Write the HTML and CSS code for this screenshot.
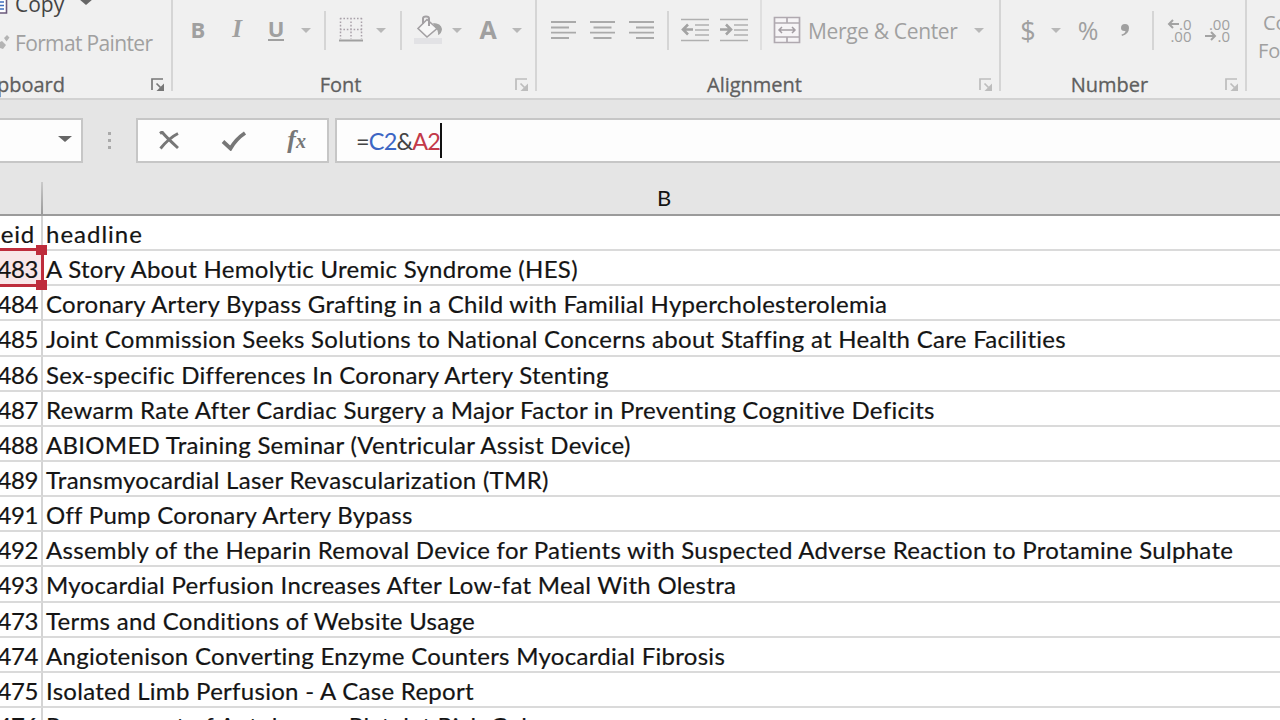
FILE: index.html
```
<!DOCTYPE html>
<html lang="en">
<head>
  <meta charset="UTF-8">
  <title>Spreadsheet</title>
  <link rel="stylesheet" href="styles.css">
</head>
<body>
  <div class="ribbon">
    <div class="group clipboard">
      <div class="clip-item copy">
        <svg class="clip-icon" width="8" height="22" viewBox="0 0 8 22"><path d="M0 3h6.5v17H0" fill="#fff" stroke="#6b5a7c" stroke-width="1.6"/><path d="M0 9h4M0 12.5h4M0 16h4" stroke="#3f6fc0" stroke-width="1.5"/></svg>
        <span>Copy</span>
        <i class="arrow dark"></i>
      </div>
      <div class="clip-item painter">
        <svg class="clip-icon" width="10" height="18" viewBox="0 0 10 18"><path d="M4 4l3-3 2.500 2.500-3 4zM0 8l2-1 4 4-3 4-3-1z" fill="#b4b4b4"/></svg>
        <span>Format Painter</span>
      </div>
      <div class="label">pboard</div>
      <svg class="launcher dark" width="14" height="14" viewBox="0 0 14 14"><use href="#launch"/></svg>
    </div>

    <div class="group font">
      <div class="tools">
        <b>B</b>
        <i class="italic">I</i>
        <b class="under">U</b>
        <i class="arrow"></i>
        <i class="sep"></i>
        <svg width="24" height="26" viewBox="0 0 24 26"><path d="M1 1.500h22M1 12.500h22M1.500 1v21M12 1v21M22.500 1v21" fill="none" stroke="#a9a1a9" stroke-width="1.500" stroke-dasharray="1.600 1.800"/><path d="M0 23.500h24" stroke="#a0a0a0" stroke-width="2"/></svg>
        <i class="arrow"></i>
        <i class="sep"></i>
        <svg width="30" height="30" viewBox="0 0 30 30"><path d="M1 23h28v6H1z" fill="#e2e2e5"/><path d="M14 4.500l10 9-10 8.500-9-8.500z" fill="#f7f7f7" stroke="#a3a0a3" stroke-width="1.600"/><path d="M10 9V3.500q0-2 3-2t3 2V11" fill="none" stroke="#a3a0a3" stroke-width="2"/><path d="M20 8q8 0 9 6-.5 5-4 6 .5-5-3-8z" fill="#a3a3a3"/></svg>
        <i class="arrow"></i>
        <b class="color-a">A</b>
        <i class="arrow"></i>
      </div>
      <div class="label">Font</div>
      <svg class="launcher" width="14" height="14" viewBox="0 0 14 14"><use href="#launch"/></svg>
    </div>

    <div class="group alignment">
      <div class="tools">
        <svg width="25" height="20" viewBox="0 0 25 20"><path d="M0 2h25M0 7.500h18M0 12.700h25M0 18h18" stroke="#aaa" stroke-width="1.800"/></svg>
        <svg width="25" height="20" viewBox="0 0 25 20"><path d="M0 2h25M3.500 7.500h18M0 12.700h25M3.500 18h18" stroke="#aaa" stroke-width="1.800"/></svg>
        <svg width="25" height="20" viewBox="0 0 25 20"><path d="M0 2h25M7 7.500h18M0 12.700h25M7 18h18" stroke="#aaa" stroke-width="1.800"/></svg>
        <i class="sep"></i>
        <svg width="28" height="26" viewBox="0 0 28 26"><path d="M0 2.500h28M14 8h14M14 13h14M14 18h14M0 23.500h28" stroke="#b0b0b0" stroke-width="1.700"/><path d="M12 12.500H2M7 7.500l-5 5 5 5" fill="none" stroke="#a3a3a3" stroke-width="2.600"/></svg>
        <svg width="28" height="26" viewBox="0 0 28 26"><path d="M0 2.500h28M14 8h14M14 13h14M14 18h14M0 23.500h28" stroke="#b0b0b0" stroke-width="1.700"/><path d="M0 12.500h10M6 7.500l5 5-5 5" fill="none" stroke="#a3a3a3" stroke-width="2.600"/></svg>
        <i class="sep tall"></i>
        <svg width="28" height="28" viewBox="0 0 28 28"><path d="M1.500 1.500h25v25h-25zM1.500 7h25M1.500 21h25M14 1.500V7M14 21v5.500" fill="#f6f4f6" stroke="#b0a9b0" stroke-width="1.700"/><path d="M6 14h16M9 11l-3 3 3 3M19 11l3 3-3 3" fill="none" stroke="#a39da3" stroke-width="1.500"/></svg>
        <span class="merge">Merge &amp; Center</span>
        <i class="arrow"></i>
      </div>
      <div class="label">Alignment</div>
      <svg class="launcher" width="14" height="14" viewBox="0 0 14 14"><use href="#launch"/></svg>
    </div>

    <div class="group number">
      <div class="tools">
        <span class="sign dollar">$</span>
        <i class="arrow"></i>
        <span class="sign">%</span>
        <svg width="10" height="14" viewBox="0 0 10 14"><path d="M5 1q4 0 4 4 0 6-7 8l-.5-1.500q3.500-1 4-3.500Q1 8.500 1 5q0-4 4-4z" fill="#a0a0a0"/></svg>
        <i class="sep"></i>
        <div class="decimals">
          <div><svg width="12" height="10" viewBox="0 0 12 10"><path d="M12 5H2M6 1L2 5l4 4" fill="none" stroke="#a3a3a3" stroke-width="2"/></svg>.0</div>
          <div>.00</div>
        </div>
        <div class="decimals">
          <div>.00</div>
          <div><svg width="12" height="10" viewBox="0 0 12 10"><path d="M0 5h10M6 1l4 4-4 4" fill="none" stroke="#a3a3a3" stroke-width="2"/></svg>.0</div>
        </div>
      </div>
      <div class="label">Number</div>
      <svg class="launcher" width="14" height="14" viewBox="0 0 14 14"><use href="#launch"/></svg>
    </div>

    <div class="group styles">
      <div>Conditional</div>
      <div>Formatting</div>
    </div>
  </div>

  <div class="formula-bar">
    <div class="name-box"><i class="arrow dark"></i></div>
    <div class="dots"><i></i><i></i><i></i></div>
    <div class="buttons">
      <svg width="22" height="20" viewBox="0 0 22 20"><path d="M2 2.500l2-1.500q4 5 16 16M20 2.500Q11 7 2.500 17.500" fill="none" stroke="#777" stroke-width="2.900"/></svg>
      <svg width="26" height="20" viewBox="0 0 26 20"><path d="M2 10.500l7.500 7Q15 8 24 2" fill="none" stroke="#777" stroke-width="3.800"/></svg>
      <span class="fx">f<small>x</small></span>
    </div>
    <div class="formula">=<span class="ref-c">C2</span>&amp;<span class="ref-a">A2</span><i class="caret"></i></div>
  </div>

  <div class="col-head">
    <div class="head-a"></div>
    <div class="head-b">B</div>
  </div>

  <div class="sheet">
    <div class="row title"><div class="a">eid</div><div class="b">headline</div></div>
    <div class="row selected"><div class="a">1483</div><div class="b">A Story About Hemolytic Uremic Syndrome (HES)</div></div>
    <div class="row"><div class="a">1484</div><div class="b">Coronary Artery Bypass Grafting in a Child with Familial Hypercholesterolemia</div></div>
    <div class="row"><div class="a">1485</div><div class="b">Joint Commission Seeks Solutions to National Concerns about Staffing at Health Care Facilities</div></div>
    <div class="row"><div class="a">1486</div><div class="b">Sex-specific Differences In Coronary Artery Stenting</div></div>
    <div class="row"><div class="a">1487</div><div class="b">Rewarm Rate After Cardiac Surgery a Major Factor in Preventing Cognitive Deficits</div></div>
    <div class="row"><div class="a">1488</div><div class="b">ABIOMED Training Seminar (Ventricular Assist Device)</div></div>
    <div class="row"><div class="a">1489</div><div class="b">Transmyocardial Laser Revascularization (TMR)</div></div>
    <div class="row"><div class="a">1491</div><div class="b">Off Pump Coronary Artery Bypass</div></div>
    <div class="row"><div class="a">1492</div><div class="b">Assembly of the Heparin Removal Device for Patients with Suspected Adverse Reaction to Protamine Sulphate</div></div>
    <div class="row"><div class="a">1493</div><div class="b">Myocardial Perfusion Increases After Low-fat Meal With Olestra</div></div>
    <div class="row"><div class="a">1473</div><div class="b">Terms and Conditions of Website Usage</div></div>
    <div class="row"><div class="a">1474</div><div class="b">Angiotenison Converting Enzyme Counters Myocardial Fibrosis</div></div>
    <div class="row"><div class="a">1475</div><div class="b">Isolated Limb Perfusion - A Case Report</div></div>
    <div class="row"><div class="a">1476</div><div class="b">Procurement of Autologous Platelet Rich Gel</div></div>
  </div>

  <svg class="defs" width="0" height="0">
    <symbol id="launch" viewBox="0 0 14 14"><path d="M1 12V1h11" fill="none" stroke="currentColor" stroke-width="1.700"/><path d="M13 5.500V13H5.500z" fill="currentColor"/><path d="M5.500 5.500l4 4" stroke="currentColor" stroke-width="1.700"/></symbol>
  </svg>
</body>
</html>
```
FILE: styles.css
```
*, ::before, ::after {
  box-sizing: border-box;
}
body {
  margin: 0;
  width: 1280px;
  height: 720px;
  overflow: hidden;
  background: #e5e5e5;
  font-family: "Open Sans", "Noto Sans", sans-serif;
  color: #141414;
}
svg {
  display: block;
}
.defs {
  position: absolute;
}

/* ribbon */
.ribbon {
  display: grid;
  grid-template-columns: 173px 364px 464px 246px 33px;
  height: 100px;
  background: #f0f0f0;
  border-bottom: 2px solid #d2d2d2;
  color: #a0a0a0;
}
.group {
  position: relative;
  height: 91px;
  border-right: 2px solid #d5d5d5;
  white-space: nowrap;
}
.tools {
  display: grid;
  height: 60px;
  align-items: center;
  justify-items: center;
}
.font .tools {
  padding-left: 5px;
  grid-template-columns: 40px 38px 40px 20px 18px 34px 26px 13px 42px 16px 46px 11px;
}
.alignment .tools {
  padding-left: 8px;
  grid-template-columns: 37px 40px 38px 16px 38px 40px 14px 38px 164px 18px;
}
.number .tools {
  padding-left: 14px;
  grid-template-columns: 26px 30px 34px 40px 16px 37px 40px;
}
.tools b, .italic {
  margin-top: -3px;
  font-size: 22px;
  line-height: 26px;
}
.tools .italic {
  font-family: "Liberation Serif", serif;
  font-weight: bold;
  font-size: 25px;
}
.tools .under {
  margin-top: -1px;
  border-bottom: 2px solid #a0a0a0;
  line-height: 21px;
}
.tools .color-a {
  font-size: 25px;
}
.merge {
  justify-self: start;
  padding: 2px 0 0 2px;
  font-size: 21px;
  letter-spacing: -0.35px;
}
.sign {
  font-size: 25px;
}
.dollar {
  font-size: 27px;
}
.decimals {
  width: 27px;
  margin-left: -3px;
  font-size: 15px;
  line-height: 12px;
}
.decimals div {
  display: flex;
  justify-content: flex-end;
  align-items: center;
}
.arrow {
  width: 0;
  height: 0;
  border: 5px solid transparent;
  border-top-color: #b8b8b8;
  border-bottom: 0;
}
.arrow.dark {
  border-width: 6px 7px 0;
  border-top-color: #666;
}
.sep {
  width: 2px;
  height: 39px;
  background: #d5d5d5;
}
.sep.tall {
  align-self: start;
  height: 50px;
  background: #dfdfdf;
}
.label {
  position: absolute;
  left: 0;
  right: 27px;
  bottom: -7px;
  text-align: center;
  font-size: 20px;
  color: #5f5f5f;
  -webkit-text-stroke: 0.3px #5f5f5f;
}
.clipboard .label {
  left: -3px;
  text-align: left;
}
.launcher {
  position: absolute;
  right: 6px;
  bottom: -1px;
  color: #bdbdbd;
}
.launcher.dark {
  color: #777;
}
.clip-item {
  display: flex;
  align-items: center;
  font-size: 21px;
}
.clip-icon {
  flex: none;
}
.copy {
  height: 24px;
  margin-top: -8px;
  gap: 7px;
  color: #444;
}
.copy .arrow {
  margin: -5px 0 0 8px;
}
.painter {
  margin-top: 13px;
  gap: 5px;
  letter-spacing: -0.65px;
}
.styles {
  padding: 9px 0 0 16px;
  border: 0;
  overflow: hidden;
  font-size: 20px;
  line-height: 28px;
}
.styles div + div {
  margin-left: -5px;
}

/* formula bar */
.formula-bar {
  display: flex;
  height: 63px;
  padding-top: 18px;
}
.name-box, .buttons, .formula {
  display: flex;
  align-items: center;
  background: #fdfdfd;
  border: 2px solid #c6c6c6;
}
.name-box {
  width: 83px;
  border-left: 0;
  padding: 0 0 3px 58px;
}
.dots {
  display: flex;
  flex-direction: column;
  justify-content: center;
  align-items: center;
  gap: 4px;
  width: 53px;
}
.dots i {
  width: 3px;
  height: 3px;
  background: #aaa;
}
.buttons {
  width: 193px;
  justify-content: space-between;
  padding: 0 21px 0 20px;
}
.fx {
  font: italic bold 26px "Liberation Serif", serif;
  line-height: 30px;
  color: #777;
}
.fx small {
  font-size: 20px;
}
.formula {
  flex: 1;
  margin-left: 6px;
  padding-left: 19px;
  border-right: 0;
  font-family: Lato, sans-serif;
  font-size: 23.5px;
  letter-spacing: -0.85px;
  color: #444;
}
.ref-c { color: #3c66c4; }
.ref-a { color: #c33a49; }
.caret {
  width: 2px;
  height: 35px;
  background: #111;
}

/* sheet */
.col-head {
  display: flex;
  height: 53px;
  padding-top: 19px;
  border-bottom: 2px solid #9b9b9b;
  font-family: Lato, sans-serif;
  font-size: 22px;
}
.head-a {
  width: 43px;
  border-right: 2px solid;
  border-image: linear-gradient(#ccc, #999) 1;
}
.head-b {
  flex: 1;
  padding-left: 5px;
  text-align: center;
  line-height: 32px;
}
.sheet {
  background: #fff;
  font-family: Lato, sans-serif;
  font-size: 24px;
  -webkit-text-stroke: 0.2px #141414;
}
.row {
  position: relative;
  display: flex;
  height: 35.15px;
  line-height: 35px;
  white-space: nowrap;
}
.row div {
  border-bottom: 2px solid #dadada;
}
.a {
  display: flex;
  justify-content: flex-end;
  width: 43px;
  padding-right: 3px;
  border-right: 2px solid #d4d4d4;
  letter-spacing: -0.4px;
}
.b {
  flex: 1;
  padding-left: 3px;
  letter-spacing: 0.29px;
}
.title .a {
  padding-right: 6px;
  letter-spacing: 0.8px;
}
.title .b {
  letter-spacing: 1px;
}
.selected .a {
  background: #f8e6e8;
}
/* range outline with its two right-hand handles */
.selected::before {
  content: "";
  position: absolute;
  left: -10px;
  top: -3px;
  width: 54px;
  height: 39px;
  border: 3px solid #be2c3c;
}
.selected::after {
  content: "";
  position: absolute;
  z-index: 1;
  left: 36px;
  top: -6px;
  width: 11px;
  height: 46px;
  background: linear-gradient(#be2c3c 10px, transparent 10px 35px, #be2c3c 35px 45px, transparent 45px);
}
```
